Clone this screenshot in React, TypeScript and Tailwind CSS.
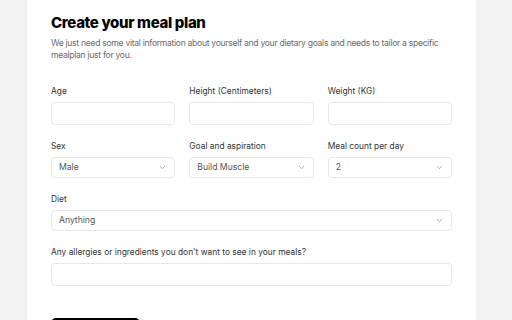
import { ChevronDown } from "lucide-react";

function Label({ children }: { children: React.ReactNode }) {
  return <label className="block text-[8.4px] leading-[12px] text-[#333]">{children}</label>;
}

function TextField({ label }: { label: string }) {
  return (
    <div>
      <Label>{label}</Label>
      <div className="mt-[5px] h-[23px] rounded-[4px] border border-[#e8e8e8] bg-white" />
    </div>
  );
}

function SelectField({ label, value }: { label: string; value: string }) {
  return (
    <div>
      <Label>{label}</Label>
      <div className="mt-[5px] h-[21px] rounded-[4px] border border-[#e8e8e8] bg-white flex items-center justify-between pl-[7px] pr-[7px]">
        <span className="text-[8.6px] text-[#555]">{value}</span>
        <ChevronDown className="w-[9px] h-[9px] text-[#808080]" strokeWidth={1.7} />
      </div>
    </div>
  );
}

export default function App() {
  return (
    <div
      className="w-[512px] h-[320px] overflow-hidden bg-[#f3f3f3] flex"
      style={{ fontFamily: "Inter, 'Noto Sans', sans-serif" }}
    >
      <div className="ml-[27px] w-[449px] h-[400px] bg-white shadow-[-1px_0_2px_rgba(0,0,0,0.04)] pl-[24px] pr-[24px] pt-[13px]">
        {/* Header */}
        <h1 className="text-[15px] leading-[20px] font-extrabold text-black tracking-[-0.35px]">Create your meal plan</h1>
        <p className="mt-[4px] text-[8.6px] leading-[12px] text-[#6b6b6b] tracking-[-0.3px]">
          We just need some vital information about yourself and your dietary goals and needs to tailor a specific
          mealplan just for you.
        </p>

        {/* Form */}
        <div className="mt-[24px] flex flex-col gap-[15px]">
          <div className="grid grid-cols-3 gap-[14px]">
            <TextField label="Age" />
            <TextField label="Height (Centimeters)" />
            <TextField label="Weight (KG)" />
          </div>
          <div className="grid grid-cols-3 gap-[14px]">
            <SelectField label="Sex" value="Male" />
            <SelectField label="Goal and aspiration" value="Build Muscle" />
            <SelectField label="Meal count per day" value="2" />
          </div>
          <SelectField label="Diet" value="Anything" />
          <TextField label="Any allergies or ingredients you don't want to see in your meals?" />
        </div>

        <button aria-label="Generate plan" className="mt-[32px] w-[89px] h-[40px] rounded-[5px] bg-black" />
      </div>
    </div>
  );
}
